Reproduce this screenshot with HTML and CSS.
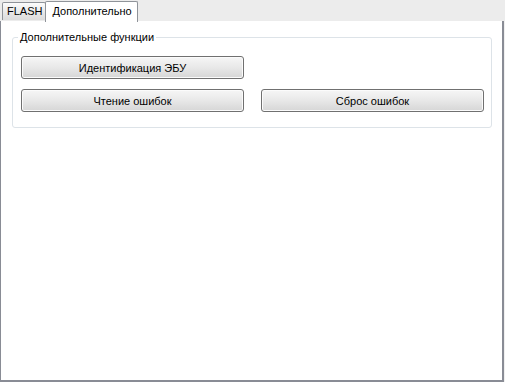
FILE: index.html
```html
<!DOCTYPE html>
<html lang="ru">
<head>
    <meta charset="UTF-8">
    <title>Дополнительно</title>
    <link rel="stylesheet" href="styles.css">
</head>
<body>
    <div class="window">
        <div class="tabs">
            <div class="tab">FLASH</div>
            <div class="tab active">Дополнительно</div>
        </div>

        <div class="pane">
            <fieldset class="group">
                <legend>Дополнительные функции</legend>
                <div class="buttons">
                    <button class="btn">Идентификация ЭБУ</button>
                    <span></span>
                    <button class="btn">Чтение ошибок</button>
                    <button class="btn">Сброс ошибок</button>
                </div>
            </fieldset>
        </div>
    </div>
</body>
</html>
```

FILE: styles.css
```css
body {
    margin: 0;
    font-family: 'Liberation Sans', Arial, sans-serif;
    font-size: 11px;
    color: #000;
    background: #f0f0f0;
}

.window {
    width: 505px;
    height: 382px;
    display: flex;
    flex-direction: column;
}

/* Tab strip */
.tabs {
    display: flex;
    align-items: flex-end;
    height: 21px;
    padding-left: 2px;
    background: #ececec;
    position: relative;
    z-index: 1;
}

.tab {
    height: 17px;
    line-height: 17px;
    padding: 0 3px 0 4px;
    border: 1px solid #8f9399;
    border-bottom: none;
    border-radius: 2px 2px 0 0;
    background: linear-gradient(#fcfcfc, #e6e6e6 60%, #dcdcdc);
    margin-bottom: 1px;
}

.tab.active {
    height: 20px;
    line-height: 19px;
    padding: 0 5px 0 6px;
    background: #fff;
    margin-bottom: -1px;
    margin-left: -1px;
}

/* Page */
.pane {
    flex: 1;
    margin-top: -1px;
    margin-right: 1px;
    border: 1px solid #898c95;
    border-right-width: 2px;
    border-bottom-width: 2px;
    background: #fff;
    padding: 9px 10px 0 11px;
}

.group {
    margin: 0;
    padding: 12px 7px 15px 8px;
    border: 1px solid #dde3e8;
    border-radius: 3px;
}

.group legend {
    padding: 0 2px;
    margin-left: -3px;
    line-height: 14px;
}

.buttons {
    display: grid;
    grid-template-columns: 1fr 1fr;
    column-gap: 17px;
    row-gap: 10px;
}

.btn {
    height: 23px;
    padding: 0;
    font: inherit;
    color: #000;
    border: 1px solid #707070;
    border-radius: 3px;
    background: linear-gradient(#f6f6f6, #e8e8e8 50%, #d6d6d6);
    box-shadow: inset 0 0 0 1px #fbfbfb;
}
```
